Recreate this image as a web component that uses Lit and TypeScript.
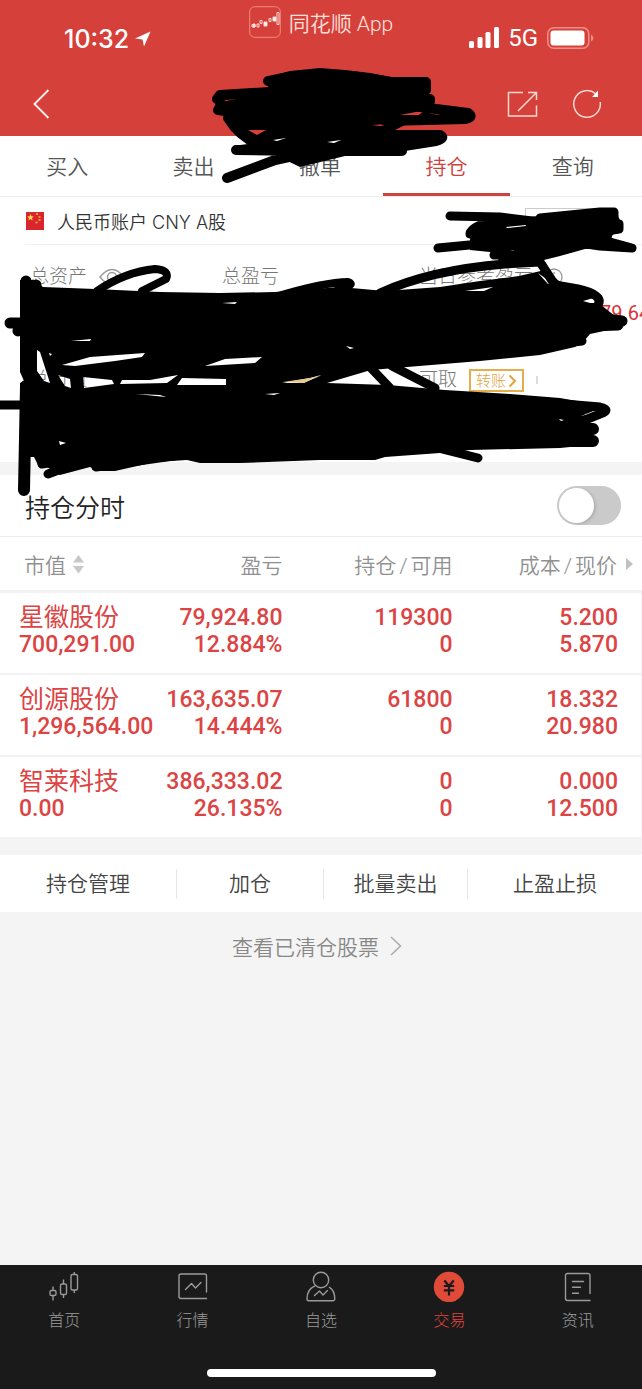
import { LitElement, html, css, svg } from "lit";
import { customElement, state } from "lit/decorators.js";

interface Holding {
  name: string;
  value: string;
  profit: string;
  rate: string;
  held: string;
  usable: string;
  cost: string;
  price: string;
}

const HOLDINGS: Holding[] = [
  { name: "星徽股份", value: "700,291.00", profit: "79,924.80", rate: "12.884%", held: "119300", usable: "0", cost: "5.200", price: "5.870" },
  { name: "创源股份", value: "1,296,564.00", profit: "163,635.07", rate: "14.444%", held: "61800", usable: "0", cost: "18.332", price: "20.980" },
  { name: "智莱科技", value: "0.00", profit: "386,333.02", rate: "26.135%", held: "0", usable: "0", cost: "0.000", price: "12.500" },
];

const TABS = ["买入", "卖出", "撤单", "持仓", "查询"];
const ACTIONS = ["持仓管理", "加仓", "批量卖出", "止盈止损"];

const NAV = [
  {
    label: "首页",
    icon: svg`<g fill="none" stroke="currentColor" stroke-width="1.4">
      <rect x="2" y="18.500" width="6" height="5" rx="1.500"/><path d="M5 14.500v4M5 23.500v5"/>
      <rect x="12.500" y="12" width="6" height="10.500" rx="1.500"/><path d="M15.500 7.500V12M15.500 22.500v3.500"/>
      <rect x="23" y="2.500" width="6.500" height="15.500" rx="1.500"/><path d="M26.300 0v2.500M26.300 18v3"/></g>`,
  },
  {
    label: "行情",
    icon: svg`<g fill="none" stroke="currentColor" stroke-width="1.4" stroke-linecap="round" stroke-linejoin="round">
      <path d="M29.500 20V4a2 2 0 0 0-2-2H4a2 2 0 0 0-2 2v20.500a2 2 0 0 0 2 2h25.500"/>
      <path d="M8.500 17.500l6-6 4 4.500 5.500-5.500"/></g>`,
  },
  {
    label: "自选",
    icon: svg`<g fill="none" stroke="currentColor" stroke-width="1.4" stroke-linecap="round" stroke-linejoin="round">
      <circle cx="16" cy="8" r="7.700"/>
      <path d="M9.500 14.200C4.500 16.500 2 20.500 2 27a1.800 1.800 0 0 0 1.800 1.800H28a1.800 1.800 0 0 0 1.800-1.800c0-5.500-1.800-9.500-5.300-11.700"/>
      <path d="M9.500 23.500l5-4.500 3.500 4 4.500-4.500"/></g>`,
  },
  {
    label: "交易",
    icon: svg`<circle cx="16" cy="15" r="15.200" fill="#e04a38"/>
      <path d="M11.300 8.500l4.700 5.500 4.700-5.500M16 14v9.500M10.800 14h10.400M10.800 18.300h10.400" fill="none" stroke="#1a1a1a" stroke-width="2.200"/>`,
  },
  {
    label: "资讯",
    icon: svg`<g fill="none" stroke="currentColor" stroke-width="1.4" stroke-linecap="round" stroke-linejoin="round">
      <path d="M28 21.500V3.500a2 2 0 0 0-2-2H5.500a2 2 0 0 0-2 2v23a2 2 0 0 0 2 2H28"/>
      <path d="M10.500 9.500h11M10.500 15.200h8M10.500 21.200h6"/></g>`,
  },
];

@customElement("app-root")
export class AppRoot extends LitElement {
  @state() private active = 3;
  @state() private intraday = false;

  static styles = css`
    :host {
      display: block;
      font-family: Roboto, "Noto Sans CJK SC", sans-serif;
      color: #333;
    }
    * { box-sizing: border-box; }
    button, a {
      font: inherit;
      color: inherit;
      background: none;
      border: 0;
      padding: 0;
      margin: 0;
      text-decoration: none;
      cursor: pointer;
    }
    svg { display: block; flex: none; }
    .page {
      position: relative;
      display: flex;
      flex-direction: column;
      min-height: 100vh;
      background: #f4f4f4;
      overflow: hidden;
    }
    .top { background: #d6403a; color: #fff; }
    .status {
      display: grid;
      grid-template-columns: 1fr auto 1fr;
      height: 72px;
      padding: 4px 48px 0;
    }
    .clock {
      display: flex;
      align-items: center;
      gap: 6px;
      height: 70px;
      padding-left: 16px;
      font: 500 25px/30px Inter, sans-serif;
    }
    .brand {
      display: flex;
      align-items: center;
      gap: 8px;
      height: 36px;
      font-size: 21px;
      font-weight: 350;
      color: #ffe1dc;
    }
    .signal {
      display: flex;
      align-items: center;
      justify-content: flex-end;
      gap: 9px;
      height: 68px;
      font-size: 24px;
    }
    .bar {
      display: flex;
      align-items: center;
      gap: 34px;
      height: 64px;
      padding: 0 40px 0 32px;
    }
    .back { margin-right: auto; }
    .tabs {
      display: flex;
      height: 61px;
      padding: 0 6px 0 4px;
      background: #fff;
      border-bottom: 1px solid #ececec;
    }
    .tab {
      flex: 1;
      font-size: 21px;
      font-weight: 350;
      color: #555;
      border-bottom: 3px solid transparent;
    }
    .tab.on { color: #cf3f3b; border-bottom-color: #cf433e; }
    .account {
      display: flex;
      align-items: center;
      gap: 12px;
      height: 48px;
      margin-left: 25px;
      padding-right: 27px;
      border-bottom: 1px solid #f0f0f0;
      font-family: Inter, "Noto Sans CJK SC", sans-serif;
      font-size: 18px;
      font-weight: 350;
    }
    .white { background: #fff; }
    .more {
      width: 90px;
      height: 26px;
      margin-left: auto;
      border: 1px solid #ccc;
    }
    .summary {
      display: grid;
      grid-template-columns: 192fr 197fr 223fr;
      grid-template-rows: 24px 24px 55px;
      padding: 20px 0 70px 30px;
      row-gap: 12px;
      font-size: 19px;
      line-height: 24px;
      font-weight: 300;
      color: #777;
    }
    .cell {
      display: flex;
      align-items: center;
      gap: 12px;
      min-width: 0;
      white-space: nowrap;
    }
    .lower { grid-row: 3; align-items: flex-end; }
    .cut { grid-area: 2 / 3; padding-left: 181px; font-size: 20px; color: #e0303a; font-weight: 400; }
    .transfer {
      display: flex;
      align-items: center;
      gap: 2px;
      height: 23px;
      padding: 0 5px;
      border: 2px solid #e5ad4d;
      color: #e2a33c;
      font-size: 15px;
      line-height: 18px;
    }
    .tick { align-self: flex-end; margin-bottom: 8px; }
    .chart {
      display: flex;
      align-items: center;
      justify-content: space-between;
      height: 62px;
      margin-top: 13px;
      padding: 0 21px 0 25px;
      background: #fff;
      border-bottom: 1px solid #ececec;
      font-size: 25px;
      font-weight: 350;
      color: #222;
    }
    .switch {
      appearance: none;
      width: 64px;
      height: 39px;
      margin: 0;
      padding: 2px;
      border-radius: 20px;
      background: #cacacb;
      cursor: pointer;
    }
    .switch::before {
      content: "";
      display: block;
      width: 35px;
      height: 35px;
      border-radius: 50%;
      background: #fff;
      box-shadow: 2px 1px 3px #0002;
    }
    .switch:checked { background: #d6403a; }
    .switch:checked::before { margin-left: auto; }
    table {
      width: 100%;
      table-layout: fixed;
      border-spacing: 0;
      background: #fff;
      text-align: right;
    }
    .c1 { width: 25%; }
    .c2 { width: 19%; }
    .c3 { width: 26.500%; }
    th {
      height: 56px;
      padding: 0;
      border-bottom: 3px solid #f2f2f2;
      font-size: 21px;
      font-weight: 350;
      color: #909090;
      white-space: nowrap;
    }
    th:first-child { padding-left: 24px; }
    th:last-child { padding-right: 9px; }
    .slash { margin: 0 3px; }
    .sort { display: flex; align-items: center; gap: 7px; }
    .end { justify-content: flex-end; gap: 9px; }
    td {
      padding: 11px 0 15px;
      border-bottom: 2px solid #f2f2f2;
      font-size: 23px;
      font-weight: 500;
      line-height: 27px;
      color: #dc4444;
      white-space: nowrap;
    }
    td:first-child { padding-left: 19px; text-align: left; }
    td:last-child { padding-right: 23px; border-right: 1px solid #f2f2f2; }
    td div { height: 27px; }
    .name { font-size: 25px; font-weight: 400; }
    .actions {
      display: grid;
      grid-template-columns: 177fr 147fr 144fr 174fr;
      align-items: center;
      height: 57px;
      margin-top: 16px;
      background: #fff;
    }
    .action {
      height: 30px;
      font-size: 21px;
      line-height: 30px;
      color: #444;
      font-weight: 350;
      border-right: 1px solid #e6e6e6;
    }
    .action:last-child { border-right: 0; }
    .closed {
      display: flex;
      align-items: center;
      justify-content: center;
      gap: 11px;
      height: 68px;
      padding-right: 8px;
      font-size: 21px;
      font-weight: 350;
      color: #888;
    }
    .dock {
      margin-top: auto;
      background: #1a1a1a;
      height: 124px;
      display: flex;
      flex-direction: column;
      align-items: center;
      justify-content: space-between;
      padding: 6px 0 12px;
    }
    .nav { display: flex; width: 100%; }
    .item {
      flex: 1;
      display: flex;
      flex-direction: column;
      align-items: center;
      gap: 7px;
      font-size: 16px;
      line-height: 24px;
      font-weight: 300;
      color: #9a9a9a;
    }
    .item.on { color: #e04540; }
    .home { width: 229px; height: 8px; border-radius: 4px; background: #fff; }
    .ink {
      position: absolute;
      top: 0;
      left: 0;
      width: 100%;
      height: 500px;
      pointer-events: none;
    }
  `;

  private ink() {
    return html`<svg class="ink" viewBox="0 0 642 500" preserveAspectRatio="none" aria-hidden="true">
      <path fill-rule="evenodd" d="M268 77L290 71 320 68 345 70 370 73 391 77 425 77 430 90 424 95 434 97 435 103 405 125 395 130 420 131 420 147 405 150 400 156 345 156 300 167 275 155 240 154 240 145 256 143 245 136 232 125 226 116 218 115 214 110 218 93 230 90 268 88Z
        M400 115L421 111 437 115ZM372 125l16-1 4 1-12 1zM248 130l18 0-9 5zM273 140l13-2-9 3zM327 142l14-2-7 3zM224 100l12-1-10 2z"/>
      <g fill="none" stroke="#000" stroke-linecap="round" stroke-linejoin="round">
        <path stroke-width="10" d="M268 81Q320 68 390 82L426 82V90M217 99L220 95 270 92M218 110L240 112M228 118Q240 138 262 146M430 99L405 105 436 109 468 113Q474 117 466 119L385 121M236 150L300 151M227 178L275 160 330 148M390 135L440 135Q446 138 436 141L385 149M402 151H350"/>
        <path stroke-width="9" d="M450 216L500 217 540 222M438 248L480 244M488 222Q470 228 470 234L500 236M540 218L600 212H614V217M600 222L619 224 619 229 600 232M610 242L632 248 600 246 560 240M494 255L540 255 570 248"/>
      </g>
      <path fill-rule="evenodd" d="M488 220L540 216 600 208 615 210 622 224 612 236 610 248 585 249 560 256 544 260 500 261 490 252 470 250 470 240 472 228Z M506 227l20-2 0 1-19 2zM510 251l4-1-1 2z"/>
      <g fill="none" stroke="#000" stroke-linecap="round" stroke-linejoin="round">
        <path stroke-width="8" d="M97 291Q125 272 155 269Q170 270 166 279L142 291M275 297Q325 282 348 282Q356 285 340 288L330 297"/>
        <path stroke-width="9" d="M380 293Q430 270 505 264L540 262 555 285 578 289Q604 295 598 305"/>
        <path stroke-width="11" d="M26 281V366L33 377M36 285V300M10 323H25M18 331L28 327M560 314L622 321M560 327L618 325"/>
        <path stroke-width="9" d="M0 405H25M371 368L390 388M392 366L435 388"/>
        <path stroke-width="12" d="M26 386L24 490M560 428L593 429M560 441L593 441"/>
        <path stroke-width="9" d="M430 446L478 458M540 402L600 407Q612 410 600 414L575 424"/>
        <path stroke-width="9" d="M42 464L60 461M48 474L85 460M96 467L180 455M505 350L582 341"/>
      </g>
      <path fill-rule="evenodd" d="M20 280L34 280 43 287 95 289 160 292 220 293 275 292 340 287 385 291 440 287 480 281 519 276 545 270 563 284 590 289 601 305 615 316 618 328 590 334 584 341 575 347 540 355 480 361 395 368 371 370 327 383 388 385 445 390 510 394 560 398 588 403 600 411 588 421 588 430 593 436 590 445 560 448 470 450 440 453 385 457 375 460 320 460 240 463 200 463 187 460 155 462 115 471 98 471 90 467 60 475 47 467 38 465 34 457 20 457 20 383 24 381 20 372Z
        M37 350L40 352 50 383 44 381 37 371ZM58 375L70 379 71 388 65 386ZM83 377L112 380 114 384 84 388ZM120 384L122 380 150 380 178 375 167 383ZM177 385L182 378 226 379 226 385ZM62 365L90 357 145 353 142 357 115 361 75 366ZM205 366L225 359 262 357 255 363ZM71 341L91 339 90 341ZM222 303L237 302 235 304ZM136 394L160 395 166 397ZM265 394L280 393 274 395ZM59 441L66 443 60 445ZM583 301L597 297 599 303 590 303ZM558 309L566 310 560 312ZM581 416L596 410 597 413ZM465 291L493 287 484 291ZM538 273L552 283 548 284ZM346 346L354 348 350 349ZM282 383L310 378 321 375 304 383ZM49 353L52 354 50 356ZM559 419l5 1-3 1z"/>
      <path fill="#e6c98a" d="M283 382l27-4 10-2-17 7z"/>
    </svg>`;
  }

  render() {
    return html`
      <div class="page">
        <header class="top">
          <div class="status">
            <div class="clock">10:32
              <svg width="16" height="16" viewBox="0 0 16 16"><path d="M15.500 .5L0 7.500 7.500 8.500 9 15.500Z" fill="#fff"/></svg>
            </div>
            <div class="brand">
              <svg width="32" height="32" viewBox="0 0 32 32" fill="none" stroke="#ffd9d4">
                <rect x=".7" y=".7" width="30.600" height="30.600" rx="5" stroke="#f08a80"/>
                <path d="M3 18.500h3v2.500H3zM11 14.500h2v3h-2zM20 12.500h2v3h-2zM28 6.500h2v12h-2zM8 18h2v3H8z"/>
                <path d="M15 16h3v4h-3zM24 11h3v4h-3zM4 18h2v3H4z" fill="#fff"/>
              </svg>
              <span>同花顺 App</span>
            </div>
            <div class="signal">
              <svg width="30" height="22" viewBox="0 0 30 22" fill="#fff"><rect y="14" width="5" height="7" rx="1.500"/><rect x="8.500" y="10" width="5" height="11" rx="1.500"/><rect x="16.500" y="5" width="5" height="16" rx="1.500"/><rect x="25" width="5" height="21" rx="1.500"/></svg>
              <span>5G</span>
              <svg width="47" height="22" viewBox="0 0 47 22"><rect x=".8" y=".8" width="41" height="20.400" rx="6" fill="none" stroke="#f08f88" stroke-width="1.500"/><rect x="3.500" y="3.500" width="34" height="15" rx="3" fill="#fff"/><path d="M44 7.500q2.500 1.500 2.500 3.500t-2.500 3.500z" fill="#f08f88"/></svg>
            </div>
          </div>
          <div class="bar">
            <button class="back" aria-label="返回"><svg width="18" height="30" viewBox="0 0 18 30"><path d="M16.500 1L2.500 15l14 14" fill="none" stroke="#ffe9e6" stroke-width="2"/></svg></button>
            <button aria-label="分享"><svg width="32" height="28" viewBox="0 0 32 28" fill="none" stroke="#ffd9d4" stroke-width="1.500"><path d="M17 2.500H2.500v23.500H30.500V15.500M12 21L30 3M22 2.500h8.500V10"/></svg></button>
            <button aria-label="刷新"><svg width="30" height="30" viewBox="0 0 30 30"><path d="M23.500 4.700A13.300 13.300 0 1 0 28.200 13" fill="none" stroke="#ffd9d4" stroke-width="1.500"/><path d="M26 1.500V8h-6z" fill="#fff"/></svg></button>
          </div>
        </header>
        <nav class="tabs">
          ${TABS.map((t, i) => html`<button class="tab ${i === this.active ? "on" : ""}" @click=${() => (this.active = i)}>${t}</button>`)}
        </nav>
        <section class="white">
          <div class="account">
            <svg width="20" height="19" viewBox="0 0 20 19"><rect x="1" y="1" width="18" height="18" fill="#d8262c"/><path d="M5.500 3l1 2.200 2.300.2-1.800 1.600.6 2.400-2.100-1.300-2.100 1.300.6-2.400-1.800-1.600 2.300-.2z" fill="#ffd94a"/><path d="M11 3h2M13.500 6h2M13.500 9h2M10.500 11.500h2" stroke="#f7b53c" stroke-width="1.500"/></svg>
            <span>人民币账户 CNY A股</span>
            <button class="more" aria-label="切换账户"></button>
          </div>
          <div class="summary">
            <div class="cell">总资产
              <svg width="26" height="18" viewBox="0 0 26 18" fill="none" stroke="#999" stroke-width="1.400"><path d="M1 9Q13-6 25 9Q13 24 1 9Z"/><circle cx="13" cy="9" r="4.500"/></svg>
            </div>
            <div class="cell">总盈亏</div>
            <div class="cell">当日参考盈亏
              <svg width="18" height="18" viewBox="0 0 18 18" fill="none" stroke="#999" stroke-width="1.300"><circle cx="9" cy="9" r="8"/><path d="M9 4v2M9 8v6"/></svg>
            </div>
            <div class="cell cut">79.64</div>
            <div class="cell lower">总市值</div>
            <div class="cell lower"></div>
            <div class="cell lower">可取
              <button class="transfer">转账<svg width="9" height="14" viewBox="0 0 9 14"><path d="M1.500 1.500L7 7l-5.500 5.500" fill="none" stroke="#e2a33c" stroke-width="2"/></svg></button>
              <svg class="tick" width="2" height="8" viewBox="0 0 2 8"><path d="M1 0v8" stroke="#bbb"/></svg>
            </div>
          </div>
        </section>
        <section class="chart">
          <label for="intraday">持仓分时</label>
          <input id="intraday" class="switch" type="checkbox" role="switch" .checked=${this.intraday}
            @change=${(e: Event) => (this.intraday = (e.target as HTMLInputElement).checked)} />
        </section>
        <table>
          <colgroup><col class="c1" /><col class="c2" /><col class="c3" /><col /></colgroup>
          <thead>
            <tr>
              <th scope="col"><div class="sort">市值<svg width="11" height="20" viewBox="0 0 11 20" fill="#c8c8c8"><path d="M5.500 1L11 8.500H0zM5.500 19.500L11 12H0z"/></svg></div></th>
              <th scope="col">盈亏</th>
              <th scope="col">持仓<span class="slash">/</span>可用</th>
              <th scope="col"><div class="sort end"><span>成本<span class="slash">/</span>现价</span><svg width="7" height="12" viewBox="0 0 7 12" fill="#c0c0c0"><path d="M0 0L7 6 0 12z"/></svg></div></th>
            </tr>
          </thead>
          <tbody>
            ${HOLDINGS.map((h) => html`<tr>
              <td><div class="name">${h.name}</div><div>${h.value}</div></td>
              <td><div>${h.profit}</div><div>${h.rate}</div></td>
              <td><div>${h.held}</div><div>${h.usable}</div></td>
              <td><div>${h.cost}</div><div>${h.price}</div></td>
            </tr>`)}
          </tbody>
        </table>
        <div class="actions">${ACTIONS.map((a) => html`<button class="action">${a}</button>`)}</div>
        <a class="closed" href="#closed">查看已清仓股票<svg width="12" height="20" viewBox="0 0 12 20"><path d="M1 1l9.500 9L1 19" fill="none" stroke="#aaa" stroke-width="1.500"/></svg></a>
        <footer class="dock">
          <nav class="nav">
            ${NAV.map((n, i) => html`<a class="item ${i === 3 ? "on" : ""}" href="#${i}"><svg width="32" height="31" viewBox="0 -1 32 31">${n.icon}</svg>${n.label}</a>`)}
          </nav>
          <div class="home"></div>
        </footer>
        ${this.ink()}
      </div>
    `;
  }
}
